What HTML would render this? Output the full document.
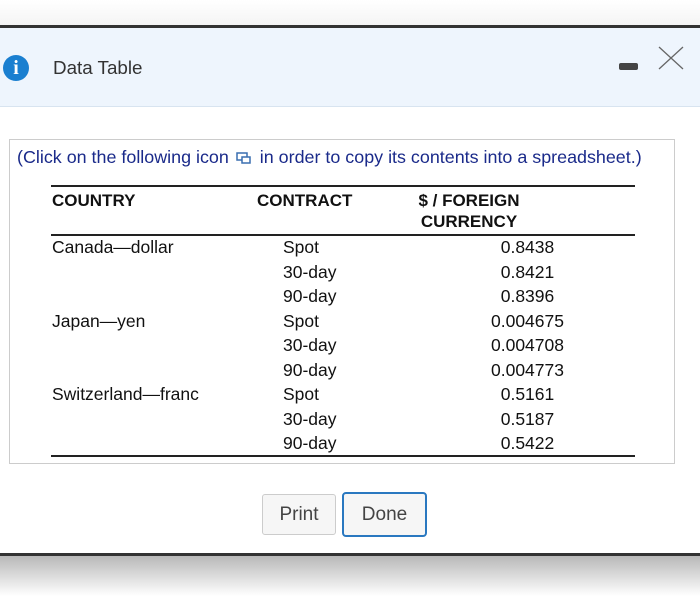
<!DOCTYPE html>
<html><head><style>
body{margin:0;width:700px;height:616px;background:#fff;font-family:"Liberation Sans",sans-serif;position:relative;overflow:hidden}
.top{position:absolute;left:0;top:0;width:700px;height:26px;background:linear-gradient(#fff,#f4f4f4)}
.bar{position:absolute;left:0;top:25px;width:700px;height:3px;background:#333}
.hdr{position:absolute;left:0;top:28px;width:700px;height:78px;background:#eef5fd;border-bottom:1px solid #d8e4f0}
.icon{position:absolute;left:3px;top:55px;width:26px;height:26px;border-radius:50%;background:#1a7fd0;color:#fff;font:bold 20px "Liberation Serif",serif;text-align:center;line-height:27px}
.title{position:absolute;left:53px;top:57px;font-size:18.8px;color:#333}
.min{position:absolute;left:619px;top:63px;width:19px;height:7px;background:#444;border-radius:2px}
.box{position:absolute;left:9px;top:139px;width:664px;height:323px;border:1px solid #ccc}
.note{position:absolute;left:17px;top:147px;font-size:17.9px;color:#1a2a8a;white-space:nowrap}
.line{position:absolute;left:51px;width:584px;background:#222}
.t{position:absolute;font-size:17.5px;color:#111;white-space:nowrap}
.b{font-weight:bold;font-size:17px}
.btn{position:absolute;font-size:19px;color:#444;text-align:center;background:#f6f6f6;box-sizing:border-box}
.foot{position:absolute;left:0;top:553px;width:700px;height:3px;background:#333}
.sh{position:absolute;left:0;top:556px;width:700px;height:40px;background:linear-gradient(#b8b8b8,#fff)}
</style></head><body>
<div class="top"></div><div class="bar"></div>
<div class="hdr"></div>
<div class="icon">i</div>
<div class="title">Data Table</div>
<div class="min"></div>
<svg style="position:absolute;left:657px;top:45px" width="28" height="26"><path d="M2 2L26 24M26 2L2 24" stroke="#666" stroke-width="1.3"/></svg>
<div class="box"></div>
<div class="note">(Click on the following icon <svg width="16" height="12" style="vertical-align:-1px;margin:0 8px 0 2px"><rect x="1" y="1" width="10" height="7" fill="none" stroke="#3a6fb0" stroke-width="1.5"/><rect x="6" y="5" width="8" height="6" fill="#fff" stroke="#3a6fb0" stroke-width="1.5"/></svg>in order to copy its contents into a spreadsheet.)</div>
<div class="line" style="top:185px;height:2px"></div>
<div class="line" style="top:234px;height:2px"></div>
<div class="line" style="top:455px;height:2px"></div>
<div class="t b" style="left:52px;top:191px">COUNTRY</div>
<div class="t b" style="left:257px;top:191px">CONTRACT</div>
<div class="t b" style="left:414px;top:190px;text-align:center;width:110px;line-height:21px">$ / FOREIGN<br>CURRENCY</div>
<div class="t" style="left:52px;top:237px">Canada—dollar</div>
<div class="t" style="left:52px;top:311px">Japan—yen</div>
<div class="t" style="left:52px;top:384px">Switzerland—franc</div>
<div class="t" style="left:283px;top:235px;line-height:24.5px">Spot<br>30-day<br>90-day<br>Spot<br>30-day<br>90-day<br>Spot<br>30-day<br>90-day</div>
<div class="t" style="left:480px;width:95px;text-align:center;top:235px;line-height:24.5px">0.8438<br>0.8421<br>0.8396<br>0.004675<br>0.004708<br>0.004773<br>0.5161<br>0.5187<br>0.5422</div>
<div class="btn" style="left:262px;top:494px;width:74px;height:41px;border:1px solid #ccc;border-radius:3px;line-height:39px">Print</div>
<div class="btn" style="left:342px;top:492px;width:85px;height:45px;border:2px solid #2a78c0;border-radius:4px;line-height:41px">Done</div>
<div class="foot"></div><div class="sh"></div>
</body></html>
